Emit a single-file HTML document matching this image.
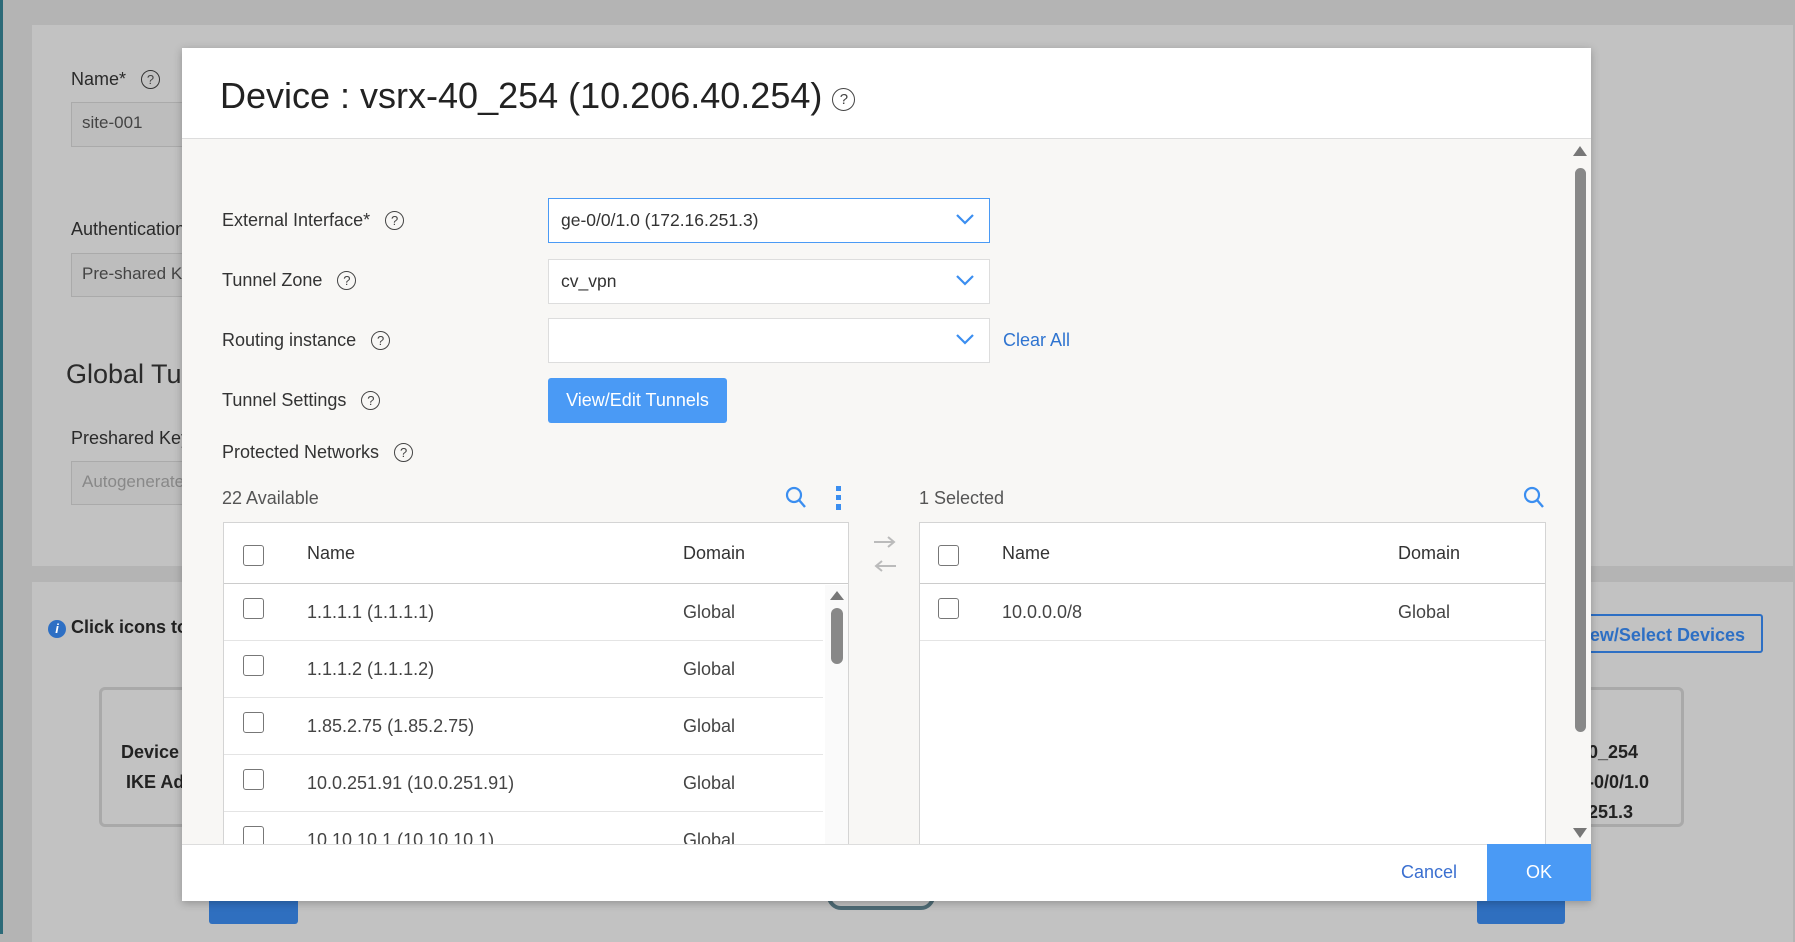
<!DOCTYPE html>
<html><head><meta charset="utf-8"><style>
*{box-sizing:border-box;margin:0;padding:0}
body{width:1795px;height:934px;overflow:hidden;background:#b4b4b4;font-family:"Liberation Sans",sans-serif;position:relative;color:#333}
.a{position:absolute}
.bgp{background:#c2c2c2}
.bt{color:#2a2a2a;font-size:18px}
.bin{background:#bdbdbd;border:1px solid #aaa;color:#444;font-size:17px;padding:10px}
.lbl{position:absolute;left:40px;font-size:18px;color:#333}
.q{display:inline-block;width:19px;height:19px;border:1.3px solid #444;border-radius:50%;font-size:13px;text-align:center;line-height:17px;margin-left:10px;vertical-align:1px;color:#444}
.inp{position:absolute;left:366px;width:442px;height:45px;background:#fff;border:1px solid #ddd;font-size:17.5px;padding:0 12px;line-height:43px;color:#333}
.chev{position:absolute;right:14px;top:13px}
.tbl{position:absolute;background:#fff;border:1px solid #d4d4d4;top:383px;height:322px;overflow:hidden}
.hd{position:absolute;left:0;right:0;top:0;height:61px;border-bottom:1.5px solid #ccc;font-size:18px;color:#333}
.row{position:absolute;left:0;height:57px;border-bottom:1px solid #e4e4e4;font-size:18px;color:#444}
.cb{position:absolute;width:21px;height:21px;border:1.6px solid #777;border-radius:3px;background:#fff}
</style></head><body>
<div class="a" style="left:0;top:0;width:3px;height:934px;background:#2c6a78"></div>
<div class="a bgp" style="left:32px;top:25px;width:1761px;height:541px"></div>
<div class="a bgp" style="left:32px;top:582px;width:1761px;height:360px"></div>
<div class="a bt" style="left:71px;top:69px">Name* <span class="q" style="border-color:#333">?</span></div>
<div class="a bin" style="left:71px;top:102px;width:200px;height:45px">site-001</div>
<div class="a bt" style="left:71px;top:219px">Authentication</div>
<div class="a bin" style="left:71px;top:253px;width:200px;height:44px">Pre-shared Key</div>
<div class="a" style="left:66px;top:359px;font-size:27px;color:#2a2a2a">Global Tunnel</div>
<div class="a bt" style="left:71px;top:428px">Preshared Key</div>
<div class="a bin" style="left:71px;top:461px;width:200px;height:44px;color:#888">Autogenerate</div>
<div class="a" style="left:48px;top:617px;font-size:18px;font-weight:bold;color:#222"><span style="display:inline-block;width:18px;height:18px;border-radius:50%;background:#2d6fc4;color:#fff;font-size:13px;text-align:center;line-height:18px;font-style:italic">i</span> Click icons to</div>
<div class="a" style="left:99px;top:687px;width:120px;height:140px;border:3px solid #a9a9a9;border-radius:6px"></div>
<div class="a" style="left:121px;top:737px;font-size:18px;font-weight:bold;color:#222;line-height:30px">Device<br>&nbsp;IKE Ad</div>
<div class="a" style="left:1560px;top:614px;width:203px;height:39px;border:2px solid #2d6fc4;border-radius:3px;color:#2d6fc4;font-size:18px;font-weight:bold;text-align:right;padding:9px 16px 0 0">ew/Select Devices</div>
<div class="a" style="left:1560px;top:687px;width:124px;height:140px;border:3px solid #a9a9a9;border-radius:6px"></div>
<div class="a" style="left:1588px;top:737px;font-size:18px;font-weight:bold;color:#222;line-height:30px">0_254<br>-0/0/1.0<br>251.3</div>
<div class="a" style="left:209px;top:890px;width:89px;height:34px;background:#2f6fbf;border-radius:3px"></div>
<div class="a" style="left:1477px;top:890px;width:88px;height:34px;background:#2f6fbf;border-radius:3px"></div>
<div class="a" style="left:827px;top:870px;width:108px;height:40px;border:4px solid #4e6b75;border-radius:14px"></div>

<div class="a" style="left:182px;top:48px;width:1409px;height:853px;background:#f8f7f5;box-shadow:0 2px 8px rgba(0,0,0,.25)">
 <div class="a" style="left:0;top:0;width:1409px;height:91px;background:#fff;border-bottom:1.5px solid #ddd"></div>
 <div class="a" style="left:38px;top:27px;font-size:36px;color:#222;white-space:nowrap">Device : vsrx-40_254 (10.206.40.254) <span class="q" style="width:23px;height:23px;font-size:15px;line-height:21px;vertical-align:4px;margin-left:0">?</span></div>

 <div class="lbl" style="top:162px">External Interface* <span class="q">?</span></div>
 <div class="lbl" style="top:222px">Tunnel Zone <span class="q">?</span></div>
 <div class="lbl" style="top:282px">Routing instance <span class="q">?</span></div>
 <div class="lbl" style="top:342px">Tunnel Settings <span class="q">?</span></div>
 <div class="lbl" style="top:394px">Protected Networks <span class="q">?</span></div>

 <div class="inp" style="top:150px;border-color:#4a9af5">ge-0/0/1.0 (172.16.251.3)<svg class="chev" width="20" height="14" viewBox="0 0 20 14"><path d="M2 3l8 8 8-8" fill="none" stroke="#3b8ef0" stroke-width="2.2"/></svg></div>
 <div class="inp" style="top:211px">cv_vpn<svg class="chev" width="20" height="14" viewBox="0 0 20 14"><path d="M2 3l8 8 8-8" fill="none" stroke="#3b8ef0" stroke-width="2.2"/></svg></div>
 <div class="inp" style="top:270px"><svg class="chev" width="20" height="14" viewBox="0 0 20 14"><path d="M2 3l8 8 8-8" fill="none" stroke="#3b8ef0" stroke-width="2.2"/></svg></div>
 <div class="a" style="left:821px;top:282px;font-size:18px;color:#2f74d0">Clear All</div>
 <div class="a" style="left:366px;top:330px;width:179px;height:45px;background:#4a9af5;border-radius:3px;color:#fff;font-size:18px;text-align:center;line-height:45px">View/Edit Tunnels</div>

 <div class="a" style="left:40px;top:440px;font-size:18px;color:#555">22 Available</div>
 <svg class="a" style="left:603px;top:438px" width="22" height="24" viewBox="0 0 22 24"><circle cx="9" cy="9" r="7" fill="none" stroke="#3b8ef0" stroke-width="2.2"/><path d="M14 14l6 7" stroke="#3b8ef0" stroke-width="2.4"/></svg>
 <div class="a" style="left:654px;top:438px;width:5px;height:24px;background:linear-gradient(#3b8ef0 0 5px,transparent 5px 9px,#3b8ef0 9px 14px,transparent 14px 18px,#3b8ef0 18px)"></div>
 <div class="a" style="left:737px;top:440px;font-size:18px;color:#555">1 Selected</div>
 <svg class="a" style="left:1341px;top:438px" width="22" height="24" viewBox="0 0 22 24"><circle cx="9" cy="9" r="7" fill="none" stroke="#3b8ef0" stroke-width="2.2"/><path d="M14 14l6 7" stroke="#3b8ef0" stroke-width="2.4"/></svg>

 <div class="tbl" style="left:41px;width:626px;top:474px;height:370px">
  <div class="hd"><div class="cb" style="left:19px;top:22px"></div><span class="a" style="left:83px;top:20px">Name</span><span class="a" style="left:459px;top:20px">Domain</span></div>
  <div class="row" style="top:61px;width:599px"><div class="cb" style="left:19px;top:14px"></div><span class="a" style="left:83px;top:18px">1.1.1.1 (1.1.1.1)</span><span class="a" style="left:459px;top:18px">Global</span></div>
  <div class="row" style="top:118px;width:599px"><div class="cb" style="left:19px;top:14px"></div><span class="a" style="left:83px;top:18px">1.1.1.2 (1.1.1.2)</span><span class="a" style="left:459px;top:18px">Global</span></div>
  <div class="row" style="top:175px;width:599px"><div class="cb" style="left:19px;top:14px"></div><span class="a" style="left:83px;top:18px">1.85.2.75 (1.85.2.75)</span><span class="a" style="left:459px;top:18px">Global</span></div>
  <div class="row" style="top:232px;width:599px"><div class="cb" style="left:19px;top:14px"></div><span class="a" style="left:83px;top:18px">10.0.251.91 (10.0.251.91)</span><span class="a" style="left:459px;top:18px">Global</span></div>
  <div class="row" style="top:289px;width:599px"><div class="cb" style="left:19px;top:14px"></div><span class="a" style="left:83px;top:18px">10.10.10.1 (10.10.10.1)</span><span class="a" style="left:459px;top:18px">Global</span></div>
  <div class="a" style="left:601px;top:62px;width:24px;height:310px;background:#fafafa"></div>
  <div class="a" style="left:606px;top:68px;width:0;height:0;border-left:7px solid transparent;border-right:7px solid transparent;border-bottom:9px solid #777"></div>
  <div class="a" style="left:607px;top:85px;width:12px;height:56px;background:#888;border-radius:6px"></div>
 </div>
 <svg class="a" style="left:690px;top:488px" width="26" height="36" viewBox="0 0 26 36"><path d="M2 6h20M16 1l6 5-6 5" fill="none" stroke="#bbb" stroke-width="2"/><path d="M24 30H4M10 25l-6 5 6 5" fill="none" stroke="#bbb" stroke-width="2"/></svg>

 <div class="tbl" style="left:737px;width:627px;top:474px;height:370px">
  <div class="hd"><div class="cb" style="left:18px;top:22px"></div><span class="a" style="left:82px;top:20px">Name</span><span class="a" style="left:478px;top:20px">Domain</span></div>
  <div class="row" style="top:61px;width:627px"><div class="cb" style="left:18px;top:14px"></div><span class="a" style="left:82px;top:18px">10.0.0.0/8</span><span class="a" style="left:478px;top:18px">Global</span></div>
 </div>

 <div class="a" style="left:1391px;top:98px;width:0;height:0;border-left:7px solid transparent;border-right:7px solid transparent;border-bottom:10px solid #777"></div>
 <div class="a" style="left:1393px;top:120px;width:11px;height:564px;background:#888;border-radius:6px"></div>
 <div class="a" style="left:1391px;top:780px;width:0;height:0;border-left:7px solid transparent;border-right:7px solid transparent;border-top:10px solid #777"></div>

 <div class="a" style="left:0;top:796px;width:1409px;height:57px;background:#fff;border-top:1.5px solid #ddd"></div>
 <div class="a" style="left:1219px;top:814px;font-size:18px;color:#3a6fd0">Cancel</div>
 <div class="a" style="left:1305px;top:796px;width:104px;height:57px;background:#4a9af5;color:#fff;font-size:18px;text-align:center;line-height:57px">OK</div>
</div>
</body></html>
